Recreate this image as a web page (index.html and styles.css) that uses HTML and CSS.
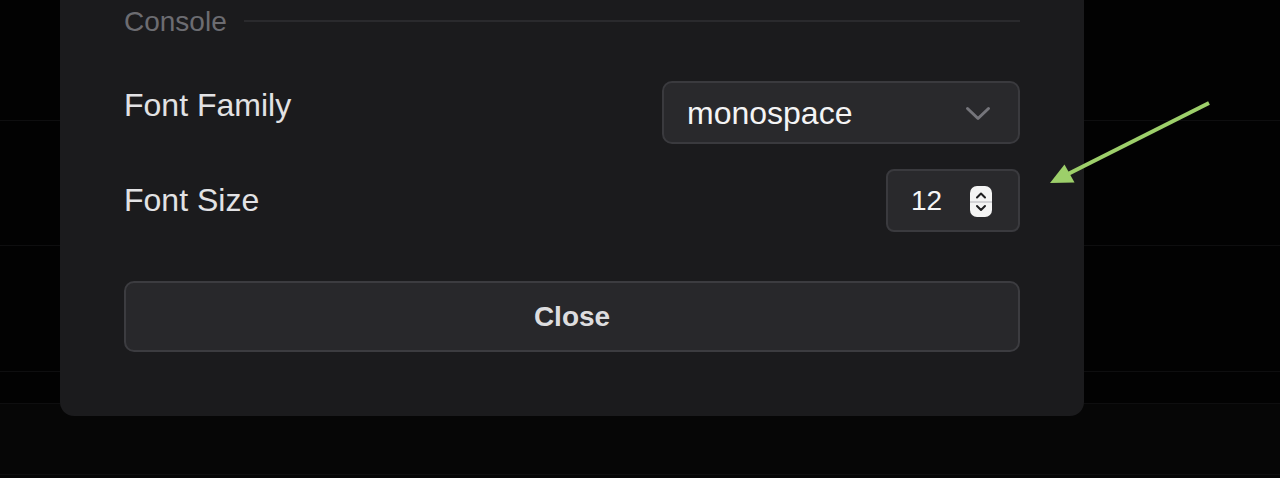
FILE: index.html
```html
<!DOCTYPE html>
<html lang="en">
<head>
<meta charset="utf-8">
<title>Settings</title>
<link rel="stylesheet" href="styles.css">
</head>
<body>
<div class="backdrop">
  <div class="bg-row r1"></div>
  <div class="bg-row r2"></div>
  <div class="bg-row r3"></div>
  <div class="bg-row r4"></div>
  <div class="bg-row r5 dim"></div>
  <div class="bg-row r6 dim"></div>
</div>

<div class="modal">
  <div class="section-head">
    <span class="section-title">Console</span>
    <span class="section-rule"></span>
  </div>

  <div class="field-row">
    <span class="field-label raised">Font Family</span>
    <div class="select">
      <span class="select-value">monospace</span>
      <svg class="chevron" width="26" height="15" viewBox="0 0 26 15"><path d="M2.5 2.5 L13 12.5 L23.5 2.5" fill="none" stroke="#75757b" stroke-width="3" stroke-linecap="round" stroke-linejoin="round"/></svg>
    </div>
  </div>

  <div class="field-row second">
    <span class="field-label">Font Size</span>
    <div class="number">
      <span class="number-value">12</span>
      <svg class="spinner" width="22" height="31" viewBox="0 0 22 31">
        <rect x="0" y="0" width="22" height="31" rx="7" fill="#f4f4f4"/>
        <line x1="0" y1="16" x2="22" y2="16" stroke="#c9c9cc" stroke-width="1.5"/>
        <path d="M7 11.5 L11 7.5 L15 11.5" fill="none" stroke="#1e1e20" stroke-width="2" stroke-linecap="round" stroke-linejoin="round"/>
        <path d="M7 20 L11 24 L15 20" fill="none" stroke="#1e1e20" stroke-width="2" stroke-linecap="round" stroke-linejoin="round"/>
      </svg>
    </div>
  </div>

  <button class="close-btn">Close</button>
</div>

<svg class="annotation" width="1280" height="478" viewBox="0 0 1280 478">
  <line x1="1209" y1="103" x2="1064" y2="176" stroke="#9dcf6a" stroke-width="4"/>
  <polygon points="1050,183 1064.5,164.5 1074.5,182.5" fill="#9dcf6a"/>
</svg>
</body>
</html>
```

FILE: styles.css
```css
* {
  box-sizing: border-box;
}

html, body {
  margin: 0;
  padding: 0;
}

body {
  width: 1280px;
  height: 478px;
  overflow: hidden;
  position: relative;
  background: #020202;
  font-family: "Liberation Sans", Arial, sans-serif;
}

.backdrop {
  display: flex;
  flex-direction: column;
}

.bg-row {
  border-bottom: 1px solid #0e0e0f;
}

.r1 { height: 121px; }
.r2 { height: 125px; }
.r3 { height: 126px; }
.r4 { height: 32px; }
.r5 { height: 71px; }
.r6 { height: 10px; }

.dim {
  background: #060606;
}

.modal {
  position: absolute;
  left: 60px;
  top: -20px;
  width: 1024px;
  padding: 25px 64px 64px;
  background: #1b1b1d;
  border-radius: 14px;
  display: flex;
  flex-direction: column;
}

.section-head {
  display: flex;
  align-items: center;
  gap: 17px;
  height: 34px;
}

.section-title {
  font-size: 28px;
  line-height: 34px;
  color: #6c6c71;
}

.section-rule {
  flex: 1;
  height: 2px;
  background: #2a2a2d;
  margin-top: -2px;
}

.field-row {
  display: flex;
  align-items: center;
  justify-content: space-between;
  height: 63px;
  margin-top: 42px;
}

.field-row.second {
  margin-top: 25px;
}

.field-label {
  font-size: 32px;
  color: #e2e2e4;
}

.field-label.raised {
  margin-bottom: 14px;
}

.select {
  width: 358px;
  height: 63px;
  background: #29292c;
  border: 2px solid #3a3a3e;
  border-radius: 10px;
  display: flex;
  align-items: center;
  justify-content: space-between;
  padding: 0 27px 0 23px;
}

.select-value {
  font-size: 32px;
  color: #f4f4f5;
  margin-top: 1px;
}

.chevron {
  display: block;
  margin-top: 2px;
}

.number {
  width: 134px;
  height: 63px;
  background: #29292c;
  border: 2px solid #3a3a3e;
  border-radius: 8px;
  display: flex;
  align-items: center;
  justify-content: space-between;
  padding: 0 26px 0 23px;
}

.number-value {
  font-size: 28px;
  color: #f6f6f7;
}

.spinner {
  display: block;
  margin-top: 2px;
}

.close-btn {
  margin-top: 49px;
  height: 71px;
  width: 100%;
  background: #28282b;
  border: 2px solid #3c3c40;
  border-radius: 10px;
  font-family: "Liberation Sans", Arial, sans-serif;
  font-weight: bold;
  font-size: 28px;
  color: #dddddf;
  cursor: pointer;
}

.annotation {
  position: absolute;
  left: 0;
  top: 0;
  pointer-events: none;
}
```
